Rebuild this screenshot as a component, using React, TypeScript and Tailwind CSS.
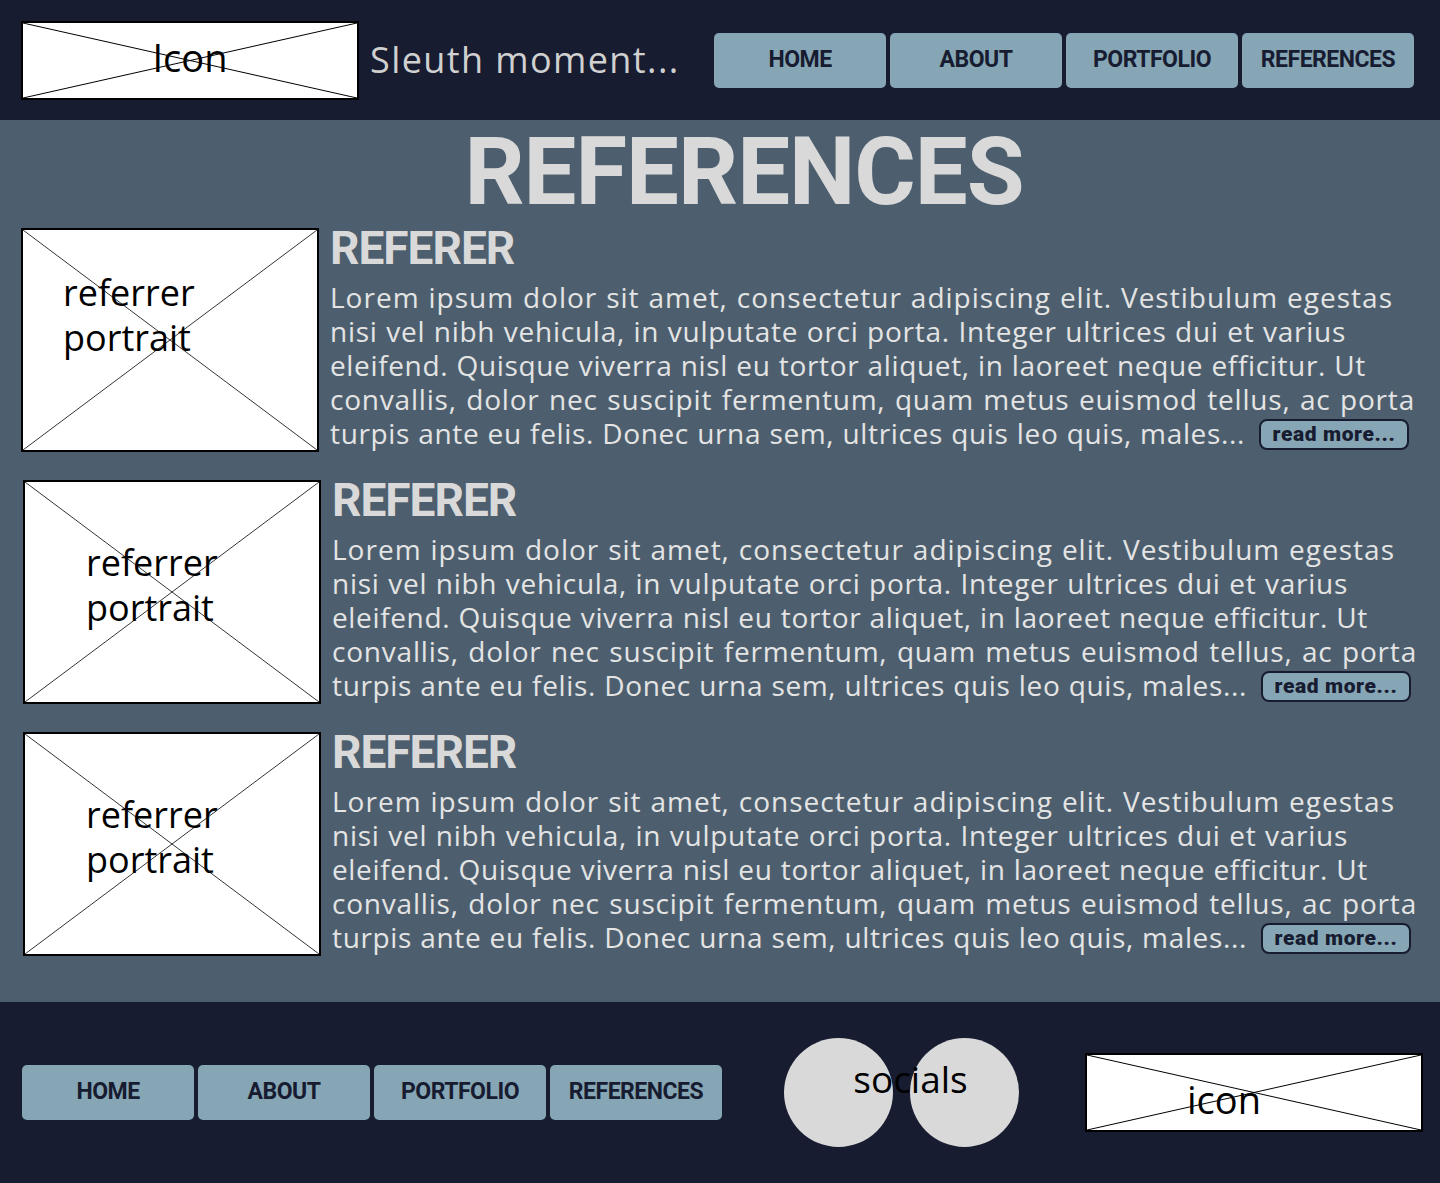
import React from 'react';

const navItems = ['HOME', 'ABOUT', 'PORTFOLIO', 'REFERENCES'];

// each line is justified to the width it has in the mockup
const lines = [
    { t: 'Lorem ipsum dolor sit amet, consectetur adipiscing elit. Vestibulum egestas', cls: 'w-[1063px] tracking-[1px]' },
    { t: 'nisi vel nibh vehicula, in vulputate orci porta. Integer ultrices dui et varius', cls: 'w-[1016px] tracking-[0.75px]' },
    { t: 'eleifend. Quisque viverra nisl eu tortor aliquet, in laoreet neque efficitur. Ut', cls: 'w-[1036px] tracking-[0.65px]' },
    { t: 'convallis, dolor nec suscipit fermentum, quam metus euismod tellus, ac porta', cls: 'w-[1085px] tracking-[0.8px]' },
];
const lastLine = 'turpis ante eu felis. Donec urna sem, ultrices quis leo quis, males...';

const cards = [
    { box: 'ml-[21px]', text: 'pl-[40px] pt-[40px]' },
    { box: 'ml-[23px]', text: 'pl-[61px] pt-[58px]' },
    { box: 'ml-[23px]', text: 'pl-[61px] pt-[58px]' },
];

const Cross = ({ thin }: { thin?: boolean }) => (
    <svg
        className="absolute inset-0 w-full h-full pointer-events-none"
        viewBox="0 0 100 100"
        preserveAspectRatio="none"
    >
        <line x1="0" y1="0" x2="100" y2="100" stroke="#000" strokeWidth={thin ? 0.8 : 1} vectorEffect="non-scaling-stroke" />
        <line x1="100" y1="0" x2="0" y2="100" stroke="#000" strokeWidth={thin ? 0.8 : 1} vectorEffect="non-scaling-stroke" />
    </svg>
);

const NavButton = ({ label }: { label: string }) => (
    <button
        type="button"
        className="w-[172px] h-[55px] rounded-[5px] bg-[#86a6b5] text-[#171c31] text-[23px] font-bold tracking-[-0.5px] flex items-center justify-center font-['Roboto',sans-serif]"
    >
        {label}
    </button>
);

const App = () => {
    return (
        <div className="w-[1440px] min-h-[1183px] bg-[#171c31] font-['Open_Sans',sans-serif]">
            <header className="h-[120px] flex items-center">
                <div className="relative ml-[21px] w-[338px] h-[79px] bg-white border-2 border-black flex items-center justify-center pb-[6px]">
                    <Cross />
                    <span className="relative text-[38px] text-black leading-none">Icon</span>
                </div>
                <span className="ml-[11px] text-[36px] text-[#d0d0d0] tracking-[1.4px]">Sleuth moment...</span>
                <nav className="ml-auto mr-[26px] flex gap-[4px]">
                    {navItems.map((n) => (
                        <NavButton key={n} label={n} />
                    ))}
                </nav>
            </header>

            <main className="h-[882px] bg-[#4d5f6e] pt-[5px]">
                <h1 className="pl-[48px] text-center text-[#d9d9d9] text-[94px] font-bold leading-none tracking-[-1px] font-['Roboto',sans-serif]">
                    REFERENCES
                </h1>
                <div className="mt-[9px] flex flex-col gap-[28px]">
                    {cards.map((c, i) => (
                        <div key={i} className={`flex ${c.box}`}>
                            <div className="relative shrink-0 w-[298px] h-[224px] bg-white border-2 border-black">
                                <Cross thin />
                                <div className={`relative text-[36px] leading-[45px] text-black ${c.text}`}>
                                    referrer
                                    <br />
                                    portrait
                                </div>
                            </div>
                            <div className="ml-[11px]">
                                <h2 className="-mt-[3px] text-[46px] font-bold leading-[46px] text-[#d9d9d9] tracking-[-1px] font-['Roboto',sans-serif]">
                                    REFERER
                                </h2>
                                <div className="mt-[9px] text-[28px] leading-[34px] text-[#e4e4e4]">
                                    {lines.map((l, j) => (
                                        <p key={j} className={`text-justify [text-align-last:justify] ${l.cls}`}>
                                            {l.t}
                                        </p>
                                    ))}
                                    <p className="flex items-center">
                                        <span className="w-[915px] tracking-[0.65px] text-justify [text-align-last:justify]">
                                            {lastLine}
                                        </span>
                                        <button
                                            type="button"
                                            className="ml-[14px] mt-[3px] inline-flex items-center justify-center w-[150px] h-[31px] rounded-[8px] border-2 border-[#171c31] bg-[#86a6b5] text-[#171c31] text-[21px] font-black tracking-[0.6px] leading-none font-['Roboto',sans-serif]"
                                        >
                                            read more...
                                        </button>
                                    </p>
                                </div>
                            </div>
                        </div>
                    ))}
                </div>
            </main>

            <footer className="h-[181px] flex items-center">
                <nav className="ml-[22px] flex gap-[4px]">
                    {navItems.map((n) => (
                        <NavButton key={n} label={n} />
                    ))}
                </nav>
                <div className="relative ml-[62px] flex gap-[17px]">
                    <div className="w-[109px] h-[109px] rounded-full bg-[#d9d9d9]" />
                    <div className="w-[109px] h-[109px] rounded-full bg-[#d9d9d9]" />
                    <span className="absolute left-0 right-0 top-[22px] pl-[18px] text-center text-[37px] leading-none text-black">
                        socials
                    </span>
                </div>
                <div className="relative ml-[66px] w-[338px] h-[79px] bg-white border-2 border-black flex items-center justify-center pt-[12px] pr-[60px]">
                    <Cross />
                    <span className="relative text-[38px] text-black leading-none">icon</span>
                </div>
            </footer>
        </div>
    );
};

export default App;
